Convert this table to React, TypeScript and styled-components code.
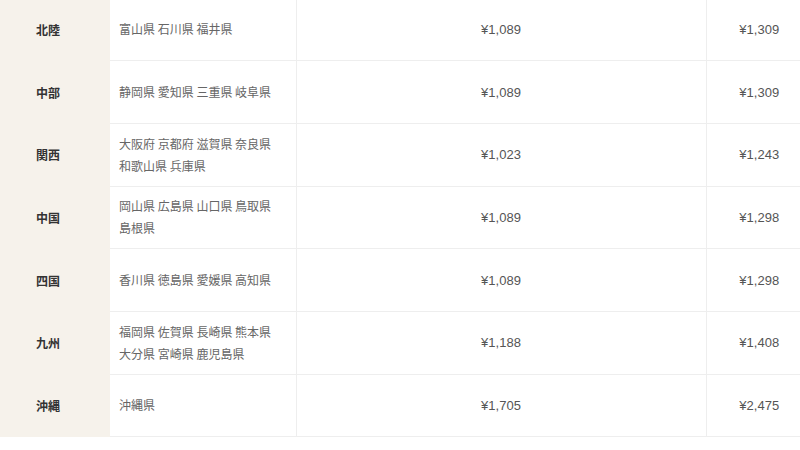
import React from "react";
import styled, { createGlobalStyle } from "styled-components";

const Global = createGlobalStyle`
  html, body {
    margin: 0;
    padding: 0;
    background: #ffffff;
    overflow: hidden;
  }
  body {
    font-family: "Noto Sans CJK JP", "Noto Sans", sans-serif;
  }
`;

const Page = styled.div`
  width: 800px;
  height: 450px;
  overflow: hidden;
`;

const Table = styled.table`
  width: 812px;
  margin-top: -2px;
  border-collapse: collapse;
  table-layout: fixed;
`;

const Row = styled.tr`
  height: 62.7px;
`;

const Region = styled.th`
  width: 110px;
  padding: 0 14px 0 0;
  background: #f6f2eb;
  border-bottom: 1px solid #f6f2eb;
  color: #333333;
  font-family: "Noto Sans CJK JP", sans-serif;
  font-size: 12px;
  font-weight: 700;
  text-align: center;
  vertical-align: middle;
  box-sizing: border-box;
`;

const Prefs = styled.td`
  width: 186px;
  padding: 0 10px 0 9px;
  border-bottom: 1px solid #eeeeee;
  border-right: 1px solid #eeeeee;
  color: #666666;
  font-family: "Noto Sans CJK JP", sans-serif;
  font-size: 12px;
  line-height: 22px;
  text-align: left;
  vertical-align: middle;
  box-sizing: border-box;
`;

const Price = styled.td<{ $w: number; $last?: boolean }>`
  width: ${(p) => p.$w}px;
  padding: 0;
  border-bottom: 1px solid #eeeeee;
  border-right: ${(p) => (p.$last ? "none" : "1px solid #eeeeee")};
  color: #555555;
  font-family: "Liberation Sans", Arial, sans-serif;
  font-size: 13px;
  text-align: center;
  vertical-align: middle;
  box-sizing: border-box;
`;

const rows = [
  { region: "北陸", prefs: "富山県 石川県 福井県", a: "¥1,089", b: "¥1,309" },
  { region: "中部", prefs: "静岡県 愛知県 三重県 岐阜県", a: "¥1,089", b: "¥1,309" },
  { region: "関西", prefs: "大阪府 京都府 滋賀県 奈良県 和歌山県 兵庫県", a: "¥1,023", b: "¥1,243" },
  { region: "中国", prefs: "岡山県 広島県 山口県 鳥取県 島根県", a: "¥1,089", b: "¥1,298" },
  { region: "四国", prefs: "香川県 徳島県 愛媛県 高知県", a: "¥1,089", b: "¥1,298" },
  { region: "九州", prefs: "福岡県 佐賀県 長崎県 熊本県 大分県 宮崎県 鹿児島県", a: "¥1,188", b: "¥1,408" },
  { region: "沖縄", prefs: "沖縄県", a: "¥1,705", b: "¥2,475" },
];

export default function App() {
  return (
    <Page>
      <Global />
      <Table>
        <tbody>
          {rows.map((r) => (
            <Row key={r.region}>
              <Region scope="row">{r.region}</Region>
              <Prefs>{r.prefs}</Prefs>
              <Price $w={410}>{r.a}</Price>
              <Price $w={106} $last>
                {r.b}
              </Price>
            </Row>
          ))}
        </tbody>
      </Table>
    </Page>
  );
}
